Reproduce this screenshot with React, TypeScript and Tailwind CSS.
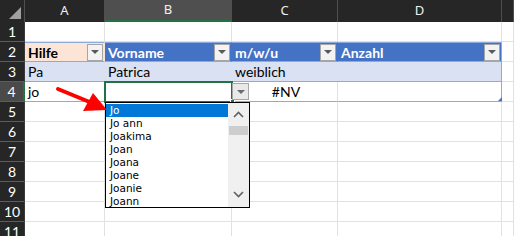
import React from "react";

const cols = ["A", "B", "C", "D", ""];
const colW = ["w-[80px]", "w-[127px]", "w-[106px]", "w-[164px]", "w-[12px]"];

function FilterBtn() {
  return (
    <div className="w-[16px] h-[17px] border border-[#a6a6a6] bg-[#f3f3f3] flex items-center justify-center shrink-0 mr-[1px]">
      <div className="w-0 h-0 border-l-[4px] border-r-[4px] border-t-[4px] border-l-transparent border-r-transparent border-t-[#595959]" />
    </div>
  );
}

type CellDef = { text?: string; cls?: string; filter?: boolean; center?: boolean };

function Row({ n, cells, hl }: { n: number; cells: CellDef[]; hl?: boolean }) {
  return (
    <div className="flex h-[20px]">
      <div
        className={`w-[25px] shrink-0 flex items-center justify-center text-[14px] text-white border-b border-[#5c5c5c] ${
          hl ? "bg-[#4a4a4a] border-r-2 border-r-[#217346]" : "bg-[#262626] border-r border-r-[#3a3a3a]"
        }`}
      >
        {n}
      </div>
      {cells.map((c, i) => (
        <div
          key={i}
          className={`${colW[i]} shrink-0 flex items-center overflow-hidden whitespace-nowrap ${
            c.center ? "justify-center" : "justify-between"
          } ${c.cls ?? "border-r border-b border-[#e1e1e1] bg-white"}`}
        >
          <span className="pl-[3px]">{c.text ?? ""}</span>
          {c.filter ? <FilterBtn /> : null}
        </div>
      ))}
    </div>
  );
}

export default function App() {
  const empty: CellDef[] = cols.map(() => ({}));
  const items = ["Jo", "Jo ann", "Joakima", "Joan", "Joana", "Joane", "Joanie", "Joann"];
  return (
    <div
      className="relative w-[514px] h-[236px] overflow-hidden bg-white text-black text-[14px]"
      style={{ fontFamily: "Lato, 'Liberation Sans', sans-serif" }}
    >
      {/* column header */}
      <div className="flex h-[22px] bg-[#262626]">
        <div className="relative w-[25px] shrink-0 border-r border-[#4f4f4f]">
          <svg className="absolute right-[3px] bottom-[3px]" width="12" height="12" viewBox="0 0 12 12">
            <polygon points="12,0 12,12 0,12" fill="#a0a0a0" />
          </svg>
        </div>
        {cols.map((c, i) => (
          <div
            key={i}
            className={`${colW[i]} shrink-0 flex items-center justify-center text-[13px] text-[#f0f0f0] border-r border-[#4f4f4f] ${
              c === "B" ? "bg-[#4f4f4f] border-b-2 border-b-[#217346]" : ""
            }`}
            style={{ fontFamily: "'Noto Sans', sans-serif" }}
          >
            {c}
          </div>
        ))}
      </div>

      <Row n={1} cells={empty} />
      <Row
        n={2}
        cells={[
          { text: "Hilfe", filter: true, cls: "bg-[#fce4d6] font-bold border-t border-b border-[#8ea9db] border-r border-r-[#fce4d6]" },
          { text: "Vorname", filter: true, cls: "bg-[#4472c4] text-white font-bold border-t border-b border-[#8ea9db] border-r border-r-[#4472c4]" },
          { text: "m/w/u", filter: true, cls: "bg-[#4472c4] text-white font-bold border-t border-b border-[#8ea9db] border-r border-r-[#4472c4]" },
          { text: "Anzahl", filter: true, cls: "bg-[#4472c4] text-white font-bold border-t border-b border-[#8ea9db] border-r border-r-[#8ea9db]" },
          {},
        ]}
      />
      <Row
        n={3}
        cells={[
          { text: "Pa", cls: "bg-[#d9e1f2] border-b border-[#8ea9db]" },
          { text: "Patrica", cls: "bg-[#d9e1f2] border-b border-[#8ea9db]" },
          { text: "weiblich", cls: "bg-[#d9e1f2] border-b border-[#8ea9db]" },
          { text: "", cls: "bg-[#d9e1f2] border-b border-[#8ea9db] border-r border-r-[#8ea9db]" },
          {},
        ]}
      />
      <Row
        n={4}
        hl
        cells={[
          { text: "jo", cls: "bg-white border-b border-[#8ea9db] border-r border-r-[#e1e1e1]" },
          { text: "", cls: "bg-white border-b border-[#8ea9db] border-r border-r-[#e1e1e1]" },
          { text: "#NV", center: true, cls: "bg-white border-b border-[#8ea9db] border-r border-r-[#e1e1e1]" },
          { text: "", cls: "bg-white border-b border-[#8ea9db] border-r border-r-[#8ea9db]" },
          {},
        ]}
      />
      {[5, 6, 7, 8, 9, 10, 11].map((n) => (
        <Row key={n} n={n} cells={empty} />
      ))}

      {/* table resize handle */}
      <div className="absolute left-[498px] top-[97px] w-0 h-0 border-l-[4px] border-b-[4px] border-l-transparent border-b-[#4472c4]" />

      {/* active cell */}
      <div className="absolute left-[104px] top-[81px] w-[129px] h-[22px] border-2 border-[#217346]" />
      <div className="absolute left-[230px] top-[99px] w-[5px] h-[5px] bg-[#217346] border border-white" />

      {/* dropdown button */}
      <div className="absolute left-[232px] top-[83px] w-[17px] h-[17px] border border-[#a6a6a6] bg-[#e9e9e9] flex items-center justify-center">
        <div className="w-0 h-0 border-l-[4px] border-r-[4px] border-t-[4px] border-l-transparent border-r-transparent border-t-[#6b6b6b]" />
      </div>

      {/* dropdown list */}
      <div
        className="absolute left-[105px] top-[102px] w-[145px] h-[106px] border border-black bg-white flex"
        style={{ fontFamily: "'DejaVu Sans', 'Liberation Sans', sans-serif" }}
      >
        <div className="flex-1 flex flex-col pt-[1px]">
          {items.map((it, i) => (
            <div
              key={it}
              className={`h-[13px] leading-[13px] text-[10.5px] pl-[4px] ${i === 0 ? "bg-[#0078d7] text-white" : "text-black"}`}
            >
              {it}
            </div>
          ))}
        </div>
        <div className="w-[21px] bg-[#f0f0f0] relative">
          <svg className="absolute top-[8px] left-[5px]" width="11" height="7" viewBox="0 0 11 7">
            <path d="M1 6 L5.5 1.5 L10 6" fill="none" stroke="#606060" strokeWidth="1.6" />
          </svg>
          <div className="absolute top-[23px] left-[1px] w-[19px] h-[9px] bg-[#cdcdcd]" />
          <svg className="absolute bottom-[9px] left-[5px]" width="11" height="7" viewBox="0 0 11 7">
            <path d="M1 1 L5.5 5.5 L10 1" fill="none" stroke="#606060" strokeWidth="1.6" />
          </svg>
        </div>
      </div>

      {/* red arrow */}
      <svg className="absolute left-0 top-0 pointer-events-none" width="514" height="236" viewBox="0 0 514 236">
        <line x1="58" y1="89" x2="92" y2="103" stroke="#ff0000" strokeWidth="4" strokeLinecap="round" />
        <polygon points="107,110 83,111 93,93" fill="#ff0000" />
      </svg>
    </div>
  );
}
